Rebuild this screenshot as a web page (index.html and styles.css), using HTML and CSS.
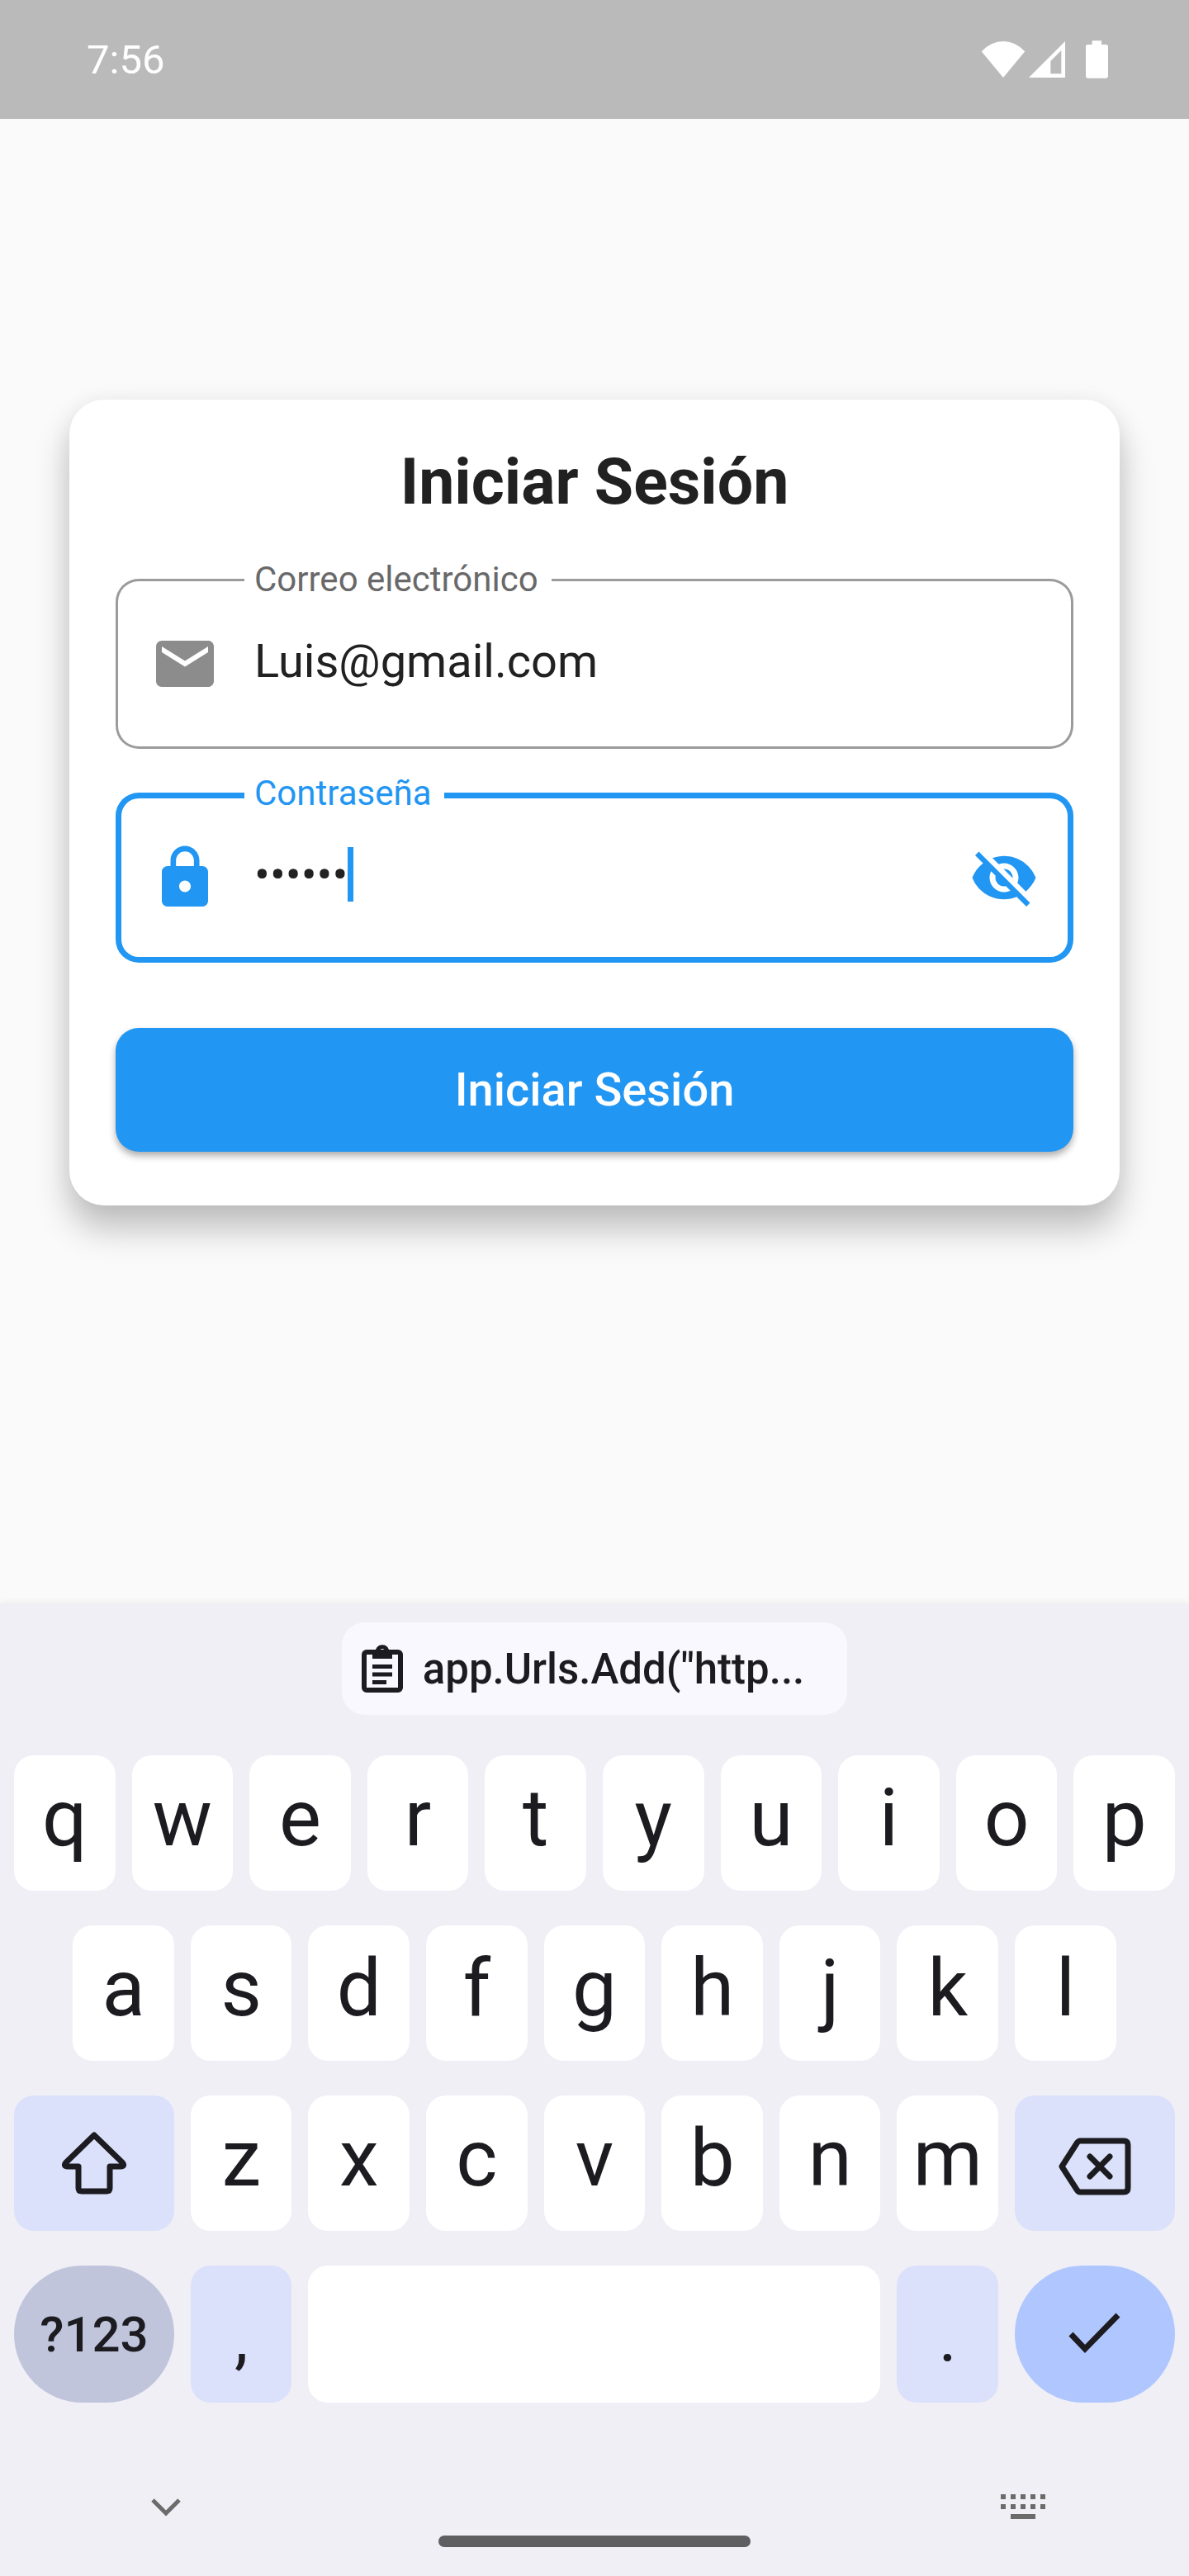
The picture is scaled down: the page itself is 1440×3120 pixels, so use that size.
FILE: index.html
```html
<!DOCTYPE html>
<html lang="es">
<head>
<meta charset="utf-8">
<meta name="viewport" content="width=device-width, initial-scale=1">
<title>Iniciar Sesión</title>
<link rel="stylesheet" href="styles.css">
</head>
<body>
<header class="status">
  <time class="status-time">7:56</time>
  <div class="status-icons">
    <svg class="wifi" viewBox="84 60 159 133" aria-hidden="true"><path d="M84 97Q120 60 163.500 60T243 97L163.500 193Z"/></svg>
    <svg class="signal" viewBox="257 62 132 132" aria-hidden="true"><path fill-rule="evenodd" d="M257 194L389 62V194ZM336 134V180H375V95Z"/></svg>
    <svg class="battery" viewBox="465 58 81 136" aria-hidden="true"><path d="M488 58H522V72H539Q546 72 546 79V187Q546 194 539 194H472Q465 194 465 187V79Q465 72 472 72H488Z"/></svg>
  </div>
</header>

<main class="screen">
  <form class="card">
    <h1 class="title">Iniciar Sesión</h1>

    <div class="field">
      <label class="field-label" for="email">Correo electrónico</label>
      <svg class="icon" viewBox="0 0 24 24" aria-hidden="true"><path d="M20 4H4c-1.100 0-1.990.9-1.990 2L2 18c0 1.100.9 2 2 2h16c1.100 0 2-.9 2-2V6c0-1.100-.9-2-2-2zm0 4l-8 5-8-5V6l8 5 8-5v2z"/></svg>
      <input class="field-input" id="email" type="email" value="Luis@gmail.com">
    </div>

    <div class="field field-active">
      <label class="field-label" for="password">Contraseña</label>
      <svg class="icon" viewBox="0 0 24 24" aria-hidden="true"><path d="M18 8h-1V6c0-2.760-2.240-5-5-5S7 3.240 7 6v2H6c-1.100 0-2 .9-2 2v10c0 1.100.9 2 2 2h12c1.100 0 2-.9 2-2V10c0-1.100-.9-2-2-2zm-6 9c-1.100 0-2-.9-2-2s.9-2 2-2 2 .9 2 2-.9 2-2 2zm3.100-9H8.900V6c0-1.710 1.390-3.100 3.100-3.100 1.710 0 3.100 1.390 3.100 3.100v2z"/></svg>
      <div class="password">
        <input class="field-input password-input" id="password" type="password" value="123456">
        <span class="caret"></span>
      </div>
      <button class="toggle" type="button" aria-label="Mostrar contraseña">
        <svg class="icon" viewBox="0 0 24 24" aria-hidden="true"><path d="M12 7c2.760 0 5 2.240 5 5 0 .65-.13 1.260-.36 1.830l2.920 2.920c1.510-1.260 2.700-2.890 3.430-4.750-1.730-4.390-6-7.500-11-7.500-1.400 0-2.740.25-3.980.7l2.160 2.160C10.740 7.130 11.350 7 12 7zM2 4.270l2.280 2.280.46.46C3.080 8.300 1.780 10.020 1 12c1.730 4.390 6 7.500 11 7.500 1.550 0 3.030-.3 4.380-.84l.42.42L19.730 22 21 20.730 3.270 3 2 4.270zM7.530 9.800l1.550 1.550c-.05.21-.08.43-.08.65 0 1.660 1.340 3 3 3 .22 0 .44-.03.65-.08l1.550 1.550c-.67.33-1.410.53-2.200.53-2.760 0-5-2.240-5-5 0-.79.2-1.530.53-2.200zm4.310-.78l3.150 3.150.02-.16c0-1.660-1.340-3-3-3l-.17.01z"/></svg>
      </button>
    </div>

    <button class="submit" type="submit">Iniciar Sesión</button>
  </form>
</main>

<section class="keyboard" aria-label="Teclado">
  <button class="chip" type="button">
    <svg class="chip-icon" viewBox="0 0 50 60" aria-hidden="true">
      <rect x="3" y="10" width="44" height="46" rx="3" fill="none" stroke="currentColor" stroke-width="6"/>
      <path fill-rule="evenodd" d="M13 7H17A8.500 8.500 0 0 1 33 7H37V18H13ZM25 6A3 3 0 1 0 25 12A3 3 0 1 0 25 6Z"/>
      <path d="M13 25H37V30H13ZM13 34.500H37V39.500H13ZM13 44H30V49H13Z"/>
    </svg>
    <span>app.Urls.Add("http...</span>
  </button>

  <div class="keys">
    <button class="key" type="button">q</button>
    <button class="key" type="button">w</button>
    <button class="key" type="button">e</button>
    <button class="key" type="button">r</button>
    <button class="key" type="button">t</button>
    <button class="key" type="button">y</button>
    <button class="key" type="button">u</button>
    <button class="key" type="button">i</button>
    <button class="key" type="button">o</button>
    <button class="key" type="button">p</button>

    <button class="key key-inset" type="button">a</button>
    <button class="key" type="button">s</button>
    <button class="key" type="button">d</button>
    <button class="key" type="button">f</button>
    <button class="key" type="button">g</button>
    <button class="key" type="button">h</button>
    <button class="key" type="button">j</button>
    <button class="key" type="button">k</button>
    <button class="key" type="button">l</button>

    <button class="key key-wide key-tint key-newrow" type="button" aria-label="Mayúsculas">
      <svg class="key-icon" viewBox="0 0 84 84" aria-hidden="true"><path fill="none" stroke="currentColor" stroke-width="7" stroke-linejoin="round" d="M23 46H10Q4 46 8 41L42 8L76 41Q80 46 74 46H61V72Q61 76 57 76H27Q23 76 23 72Z"/></svg>
    </button>
    <button class="key" type="button">z</button>
    <button class="key" type="button">x</button>
    <button class="key" type="button">c</button>
    <button class="key" type="button">v</button>
    <button class="key" type="button">b</button>
    <button class="key" type="button">n</button>
    <button class="key" type="button">m</button>
    <button class="key key-wide key-tint" type="button" aria-label="Borrar">
      <svg class="key-icon key-icon-delete" viewBox="0 0 88 84" aria-hidden="true"><g fill="none" stroke="currentColor" stroke-width="7" stroke-linejoin="round" stroke-linecap="round"><path d="M26 15H79Q84 15 84 20V72Q84 77 79 77H26Q24 77 22 74L4 46L22 18Q24 15 26 15Z"/><path d="M38 34L62 58M62 34L38 58"/></g></svg>
    </button>

    <button class="key key-wide key-round key-symbols" type="button">?123</button>
    <button class="key key-tint key-mark" type="button">,</button>
    <button class="key key-space" type="button" aria-label="Espacio"></button>
    <button class="key key-tint key-mark" type="button">.</button>
    <button class="key key-wide key-round key-done" type="button" aria-label="Listo">
      <svg class="key-icon" viewBox="0 0 84 84" aria-hidden="true"><path fill="none" stroke="currentColor" stroke-width="7" d="M13 42L30 60L70 19"/></svg>
    </button>
  </div>

  <nav class="nav">
    <button class="nav-button" type="button" aria-label="Ocultar teclado">
      <svg class="nav-icon" viewBox="0 0 84 42" aria-hidden="true"><path fill="none" stroke="currentColor" stroke-width="5" d="M26 13L42 29L58 13"/></svg>
    </button>
    <button class="nav-button" type="button" aria-label="Cambiar teclado">
      <svg class="nav-icon" viewBox="0 0 84 42" aria-hidden="true"><path d="M15 6h6v6h-6zm12 0h6v6h-6zm12 0h6v6h-6zm12 0h6v6h-6zm12 0h6v6h-6zM15 18h6v6h-6zm12 0h6v6h-6zm12 0h6v6h-6zm12 0h6v6h-6zm12 0h6v6h-6zM27 30h30v6H27z"/></svg>
    </button>
  </nav>
  <div class="home-bar"></div>
</section>
</body>
</html>
```
FILE: styles.css
```css
* {
  box-sizing: border-box;
}

body {
  margin: 0;
  min-height: 100vh;
  display: flex;
  flex-direction: column;
  background: #fafafa;
  color: #212121;
  font-family: Roboto, "Liberation Sans", sans-serif;
}

button,
input {
  margin: 0;
  padding: 0;
  border: 0;
  background: none;
  color: inherit;
  font: inherit;
}

input {
  outline: 0;
}

svg {
  display: block;
  fill: currentColor;
}

/* Status bar */
.status {
  display: flex;
  align-items: center;
  justify-content: space-between;
  height: 144px;
  padding: 0 98px 0 105px;
  background: #bababa;
  color: #fff;
}

.status-time {
  font-size: 49px;
}

.status-icons {
  display: flex;
  align-items: center;
  gap: 4px;
}

.wifi {
  width: 54px;
  height: 44px;
}

.signal {
  width: 44px;
  height: 44px;
}

.battery {
  width: 27px;
  height: 46px;
  margin-left: 21px;
}

/* Login card */
.screen {
  flex: 1;
  padding: 340px 84px 84px;
}

.card {
  display: flex;
  flex-direction: column;
  padding: 56px 56px 65px;
  border-radius: 42px;
  background: #fff;
  box-shadow: 0 28px 42px rgba(0, 0, 0, .24), 0 0 28px rgba(0, 0, 0, .05);
}

.title {
  margin: 0 0 73px;
  font-size: 77px;
  line-height: 88px;
  font-weight: 700;
  text-align: center;
}

.field {
  position: relative;
  display: flex;
  align-items: center;
  gap: 42px;
  height: 206px;
  padding: 0 42px;
  border-radius: 28px;
  box-shadow: inset 0 0 0 3px #9b9b9b;
  color: #8c8c8c;
}

.field-active {
  margin-top: 53px;
  box-shadow: inset 0 0 0 7px #2196f3;
  color: #2196f3;
}

.field-label {
  position: absolute;
  top: -23px;
  left: 156px;
  padding: 0 16px 0 12px;
  background: #fff;
  color: #696969;
  font-size: 42px;
  line-height: 48px;
}

.field-active .field-label {
  color: inherit;
}

.icon {
  width: 84px;
  height: 84px;
}

.field-input {
  flex: 1;
  min-width: 0;
  height: 66px;
  margin-bottom: 6px;
  color: #212121;
  font-size: 56px;
}

.password {
  flex: 1;
  display: flex;
  align-items: center;
}

.password-input {
  flex: none;
  width: 113px;
}

.caret {
  width: 7px;
  height: 66px;
  margin-bottom: 8px;
  background: #2196f3;
}

.submit {
  height: 150px;
  margin-top: 79px;
  border-radius: 28px;
  background: #2196f3;
  box-shadow: 0 5px 8px rgba(0, 0, 0, .32);
  color: #fff;
  font-size: 56px;
  font-weight: 500;
}

/* On-screen keyboard */
.keyboard {
  display: flex;
  flex-direction: column;
  padding: 23px 17px 35px;
  background: #f0eff6;
  box-shadow: 0 -1px 8px rgba(0, 0, 0, .06);
  color: #1b1b20;
}

.chip {
  align-self: center;
  display: flex;
  align-items: center;
  gap: 24px;
  height: 112px;
  margin-bottom: 49px;
  padding: 0 52px 0 24px;
  border-radius: 28px;
  background: #f9f8fe;
  font-size: 51px;
  font-weight: 500;
}

.chip-icon {
  width: 50px;
  height: 60px;
}

.keys {
  display: grid;
  grid-template-columns: repeat(20, minmax(0, 1fr));
  grid-template-rows: 164px 164px 164px 166px;
  gap: 42px 20px;
}

.key {
  display: flex;
  align-items: center;
  justify-content: center;
  grid-column: span 2;
  padding-bottom: 12px;
  border-radius: 24px;
  background: #fff;
  font-size: 96px;
}

.key-inset {
  grid-column: 2 / span 2;
}

.key-wide {
  grid-column: span 3;
  padding: 0;
}

.key-newrow {
  grid-column: 1 / span 3;
}

.key-tint {
  background: #dce1fb;
}

.key-round {
  border-radius: 84px;
}

.key-symbols {
  background: #c0c5dc;
  font-size: 60px;
  font-weight: 500;
}

.key-mark {
  padding: 8px 0 0;
  font-size: 84px;
}

.key-space {
  grid-column: span 10;
}

.key-done {
  background: #afc6ff;
}

.key-icon {
  width: 84px;
  height: 84px;
}

.key-icon-delete {
  width: 88px;
}

.nav {
  display: flex;
  justify-content: space-between;
  margin-top: 105px;
  padding: 0 142px;
  color: #6b6b6b;
}

.nav-icon {
  width: 84px;
  height: 42px;
}

.home-bar {
  align-self: center;
  width: 378px;
  height: 14px;
  margin-top: 14px;
  border-radius: 7px;
  background: #5f5f61;
}
```
